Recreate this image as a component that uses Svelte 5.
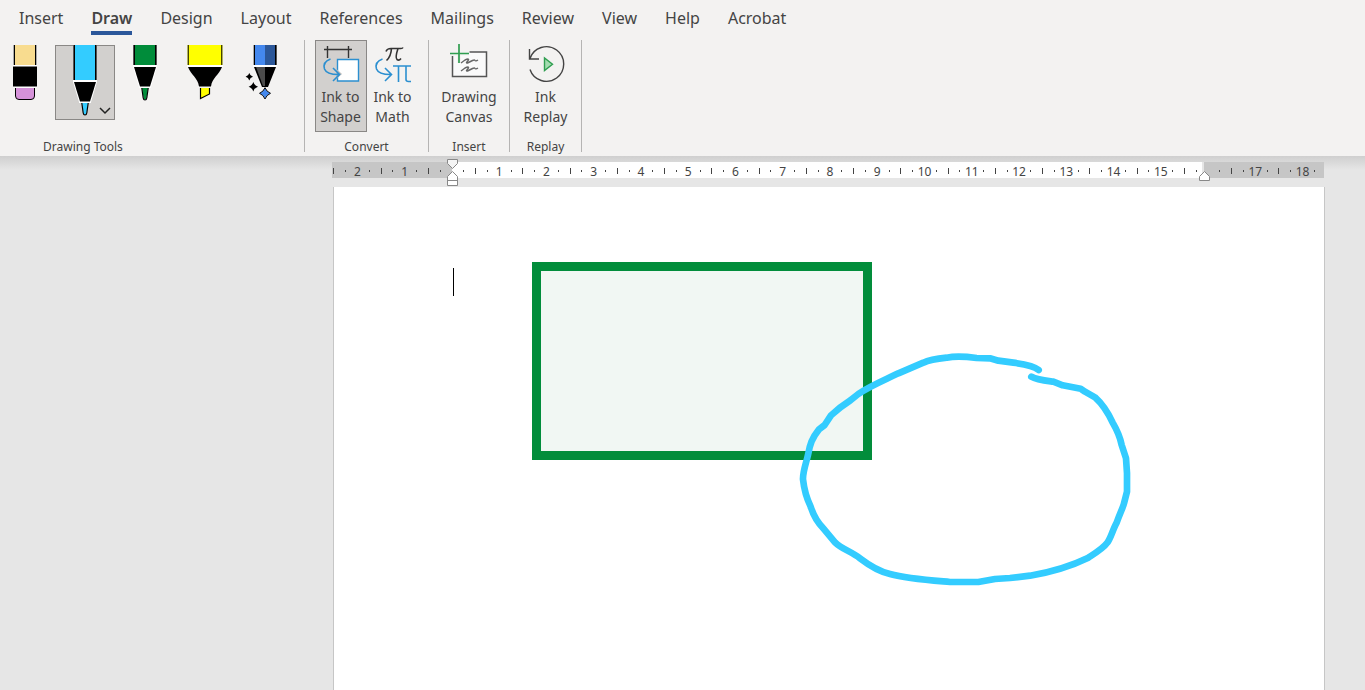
<script lang="ts">
	const tabs = ['Insert', 'Draw', 'Design', 'Layout', 'References', 'Mailings', 'Review', 'View', 'Help', 'Acrobat'];
	let active = $state('Draw');
	let tool = $state('pen');

	// four marks per centimetre, starting 2.5 cm left of the margin
	const marks = Array.from({ length: 84 }, (_, i) => i - 10);

	const kind = (n: number) => {
		if (n === 0 || n === 64) return 'blank';
		if (n % 4 === 0) return 'number';
		return n % 2 === 0 ? 'tick' : 'dot';
	};
</script>

<header class="ribbon">
	<nav class="tabs">
		{#each tabs as tab}
			<button class="tab" class:active={active === tab} onclick={() => (active = tab)}>
				<span>{tab}</span>
			</button>
		{/each}
	</nav>

	<div class="groups">
		<section class="group tools">
			<div class="pens">
				<button class="pen" class:selected={tool === 'eraser'} aria-label="Eraser" onclick={() => (tool = 'eraser')}>
					<svg width="60" height="75" viewBox="0 0 60 75">
						<path d="M18 0h24v20H18z" fill="#aaa" />
						<path d="M19 0h22v20H19z" fill="#000" />
						<path d="M20 0h20v20H20z" fill="#f8dc8f" />
						<path d="M18 20h24v23H18z" fill="#fff" />
						<path d="M18 21.5h24v20H18z" fill="#000" />
						<path d="M20.5 43h19v8q0 3.5-3.5 3.5H24q-3.500 0-3.500-3.500z" fill="#d592d9" />
						<path d="M20.5 43v8q0 3.5 3.5 3.5h12q3.5 0 3.5-3.5v-8" fill="none" stroke="#000" />
					</svg>
				</button>
				<button class="pen" class:selected={tool === 'pen'} aria-label="Pen: light blue" onclick={() => (tool = 'pen')}>
					<svg width="60" height="75" viewBox="0 0 60 75">
						<path d="M18 0h24v35H18z" fill="#aaa" />
						<path d="M18.5 0h23v35h-23z" fill="#000" />
						<path d="M20 0h20v35H20z" fill="#33ccff" />
						<path d="M18 35h24v2l-6 20v1H24v-1l-6-20z" fill="#fff" />
						<path d="M19 37h22l-6 19.5H25z" fill="#000" />
						<path d="M27 58l1.5 10q.2 1.5 1.5 1.5t1.500-1.500L33 58z" fill="#33ccff" />
						<path d="M26.8 58l1.400 10q.3 2 1.800 2t1.800-2l1.400-10" fill="none" stroke="#000" stroke-width="1.2" />
						<path d="M45 63l5 5 5-5" fill="none" stroke="#222" stroke-width="1.5" />
					</svg>
				</button>
				<button class="pen" class:selected={tool === 'green'} aria-label="Pen: green" onclick={() => (tool = 'green')}>
					<svg width="60" height="75" viewBox="0 0 60 75">
						<path d="M18 0h24v20H18z" fill="#aaa" />
						<path d="M18.5 0h23v20h-23z" fill="#000" />
						<path d="M20 0h20v20H20z" fill="#008c3a" />
						<path d="M18 20h24v2l-6 20v1H24v-1l-6-20z" fill="#fff" />
						<path d="M19 22h22l-6 19.5H25z" fill="#000" />
						<path d="M27 43l1.5 10q.2 1.5 1.5 1.5t1.500-1.500L33 43z" fill="#008c3a" />
						<path d="M26.8 43l1.400 10q.3 2 1.800 2t1.800-2l1.400-10" fill="none" stroke="#000" stroke-width="1.2" />
					</svg>
				</button>
				<button class="pen" class:selected={tool === 'marker'} aria-label="Highlighter: yellow" onclick={() => (tool = 'marker')}>
					<svg width="60" height="75" viewBox="0 0 60 75">
						<path d="M12 0h36v20H12z" fill="#b0b060" />
						<path d="M13 0h34v20H13z" fill="#444400" />
						<path d="M14 0h32v20H14z" fill="#ffff00" />
						<path d="M12 20h36v2H12z" fill="#fff" />
						<path d="M13 22h34c-3 8-10 11-11 19.5H24C23 33 16 30 13 22z" fill="#000" />
						<path d="M25.5 43v10.5l9-4.500v-6z" fill="#ffff00" />
						<path d="M25.5 43v10.5l9-4.500v-6" fill="none" stroke="#000" stroke-width="1.2" />
					</svg>
				</button>
				<button class="pen" class:selected={tool === 'action'} aria-label="Action Pen" onclick={() => (tool = 'action')}>
					<svg width="60" height="75" viewBox="0 0 60 75">
						<path d="M18 0h24v20H18z" fill="#aaa" />
						<path d="M19 0h22.5v20H19z" fill="#000" />
						<path d="M20 0h10v20H20z" fill="#4488ee" />
						<path d="M30 0h10v20H30z" fill="#2b5799" />
						<path d="M18 20h24v2H18z" fill="#fff" />
						<path d="M19 22h22l-8 20h-6z" fill="#000" />
						<path d="M21 22h9v19h-2z" fill="#4c4c4c" />
						<path d="M14.3 28q.8 3 3.700 3.700-2.900.8-3.700 3.700-.8-2.900-3.700-3.700 2.900-.7 3.700-3.700zM18.300 37q1.200 3.700 4.700 4.700-3.500 1-4.700 4.700-1.200-3.700-4.700-4.700 3.500-1 4.700-4.700z" fill="#000" />
						<path d="M30 42.7q1.500 4 5.500 5.600-4 1.700-5.500 5.700-1.500-4-5.500-5.700 4-1.600 5.500-5.600z" fill="#4488ee" stroke="#111" />
					</svg>
				</button>
			</div>
			<h2>Drawing Tools</h2>
		</section>

		<section class="group">
			<div class="commands">
				<button class="command pressed" aria-pressed="true">
					<svg width="40" height="40" viewBox="0 0 40 40">
						<path d="M3 5.5h28M6.500 2v12M27.500 2v12" fill="none" stroke="#333" stroke-width="1.4" />
						<path d="M16.5 15.500h21v21.500h-21z" fill="#fff" stroke="#2b8fd0" stroke-width="1.4" />
						<path d="M15.500 25l5.500 5-5.500 5z" fill="#bbb" />
						<path d="M9.500 15C4 17 2 20 3.500 25c1.500 4 6 5.500 14 5.500M12 24l6.500 6.500L12 37" fill="none" stroke="#2b8fd0" stroke-width="1.6" />
					</svg>
					<span>Ink to<br />Shape</span>
				</button>
				<button class="command">
					<svg width="40" height="40" viewBox="0 0 40 40">
						<path d="M13 7.500q1-3 5-3h10q1.500 0 2-1M18.500 4.500q-.5 8-5 12M25 4.500q-3 9-1 11 2 1.500 4-1" fill="none" stroke="#333" stroke-width="1.6" />
						<path d="M9.500 15C4 17 2 20 3.500 25c1.500 4 6 5.500 14 5.500M12 24l6.500 6.500L12 37M20 22h18M25.500 22v16M33 22v13.500q0 2 2.500 2h2.500" fill="none" stroke="#2b8fd0" stroke-width="1.6" />
					</svg>
					<span>Ink to<br />Math</span>
				</button>
			</div>
			<h2>Convert</h2>
		</section>

		<section class="group insert">
			<div class="commands">
				<button class="command">
					<svg width="40" height="40" viewBox="0 0 40 40">
						<path d="M3.500 12v20.500h34V8h-17" fill="#fafafa" stroke="#555" stroke-width="1.5" />
						<path d="M10 0v19M1 9.500h19" fill="none" stroke="#f3f2f1" stroke-width="4" />
						<path d="M10 0v19M1 9.500h19" fill="none" stroke="#2f9e50" stroke-width="1.7" />
						<path d="M12 19l4-3q4-2 3.500 0l-2 2.500q0 1 2 0l4-2q2-1 2.500 0t3-.5M12 27l4-3q4-2 3.500 0l-2 2.500q0 1 2 0l4-2q2-1 2.500 0t3-.5" fill="none" stroke="#666" stroke-width="1.4" />
					</svg>
					<span>Drawing<br />Canvas</span>
				</button>
			</div>
			<h2>Insert</h2>
		</section>

		<section class="group replay">
			<div class="commands">
				<button class="command">
					<svg width="40" height="40" viewBox="0 0 40 40">
						<path d="M4 14.500A17.300 17.300 0 1 1 4 25.500M3.500 5v10H13" fill="none" stroke="#444" stroke-width="1.4" />
						<path d="M18.500 14v12.500l8-6.200z" fill="#a3dcb0" stroke="#2f9e50" stroke-width="1.4" />
					</svg>
					<span>Ink<br />Replay</span>
				</button>
			</div>
			<h2>Replay</h2>
		</section>
	</div>
</header>

<main class="workspace">
	<div class="ruler">
		<div class="marks">
			{#each marks as n}
				<span class="mark {kind(n)}">{kind(n) === 'number' ? Math.abs(n / 4) : ''}</span>
			{/each}
		</div>
		<svg class="indent left" width="12" height="28" viewBox="0 0 12 28">
			<path d="M.5.5h10v4l-5 5-5-5z" fill="#f4f4f4" stroke="#888" />
			<path d="M5.5 12.500l5 5v9H.5v-9zM.5 21.500h10" fill="#fff" stroke="#888" />
		</svg>
		<svg class="indent right" width="12" height="28" viewBox="0 0 12 28">
			<path d="M5.5 12.500l5 5v4H.5v-4z" fill="#fff" stroke="#888" />
		</svg>
	</div>

	<div class="page">
		<svg width="820" height="503" viewBox="0 0 820 503">
			<path d="M119.500 81v28" stroke="#000" />
			<rect x="202.500" y="79.500" width="331" height="189" fill="#f1f7f3" stroke="#028d3b" stroke-width="9" />
			<svg x="446" y="153" width="370" height="260" viewBox="0 0 1110 780">
				<path
					d="M776 90C765 80 730 72 700 68L655 62 630 55 590 54C560 50 520 49 500 53 470 56 440 63 430 68L355 100C310 122 270 138 235 162L210 182C185 198 165 215 153 226L134 255 117 268C95 295 90 315 85 340 80 365 68 395 69 418 72 445 80 475 92 500 100 525 115 550 130 565L165 607C185 627 215 635 240 655 270 678 300 695 330 702 380 716 440 720 510 726L595 726 645 717 690 714 750 707C820 695 880 675 925 653 945 640 970 625 982 608 992 595 998 570 1010 548 1020 520 1030 500 1032 490L1041 455V400L1038 355 1025 315C1020 290 1005 260 998 248 985 220 965 190 945 172L915 155 902 146 848 136 820 125C795 122 770 120 754 110"
					fill="none"
					stroke="#33ccff"
					stroke-width="20"
					stroke-linecap="round"
					stroke-linejoin="round"
				/>
			</svg>
		</svg>
	</div>
</main>

<style>
	:global(body) {
		margin: 0;
		background: #e6e6e6;
	}

	.ribbon {
		background: #f3f2f1;
		color: #444;
		font-family: 'Noto Sans', sans-serif;
	}

	button {
		font-family: inherit;
		color: inherit;
		background: transparent;
		border: 0;
		padding: 0;
	}

	.tabs {
		display: flex;
		align-items: flex-start;
		gap: 28px;
		height: 36px;
		padding-left: 19px;
		box-sizing: border-box;
	}

	.tab {
		height: 35px;
		box-sizing: border-box;
		border-bottom: 4px solid transparent;
		font-size: 16px;
		line-height: 36px;
		white-space: nowrap;
	}

	.tab span {
		display: block;
		height: 31px;
	}

	.tab.active {
		font-weight: 600;
		border-bottom-color: #2b579a;
	}

	.groups {
		display: flex;
		height: 120px;
		box-sizing: border-box;
		padding: 4px 0;
	}

	.group {
		display: flex;
		flex-direction: column;
		align-items: center;
		justify-content: space-between;
		width: 123px;
		border-right: 1px solid #b5b4b3;
	}

	.group.tools {
		width: 304px;
		align-items: flex-start;
	}

	.group.insert {
		width: 80px;
	}

	.group.replay {
		width: 71px;
	}

	h2 {
		margin: 0;
		font-size: 12px;
		font-weight: 400;
		line-height: 10px;
	}

	.tools h2 {
		padding-left: 43px;
	}

	.pens {
		display: flex;
		margin-left: -5px;
		padding-top: 5px;
	}

	.pen {
		width: 60px;
		height: 75px;
	}

	.pen svg {
		display: block;
	}

	.pen.selected {
		background: #d2d0ce;
		box-shadow: inset 0 0 0 1px #8a8886;
	}

	.commands {
		display: flex;
	}

	.command {
		min-width: 52px;
		height: 92px;
		display: flex;
		flex-direction: column;
		align-items: center;
		padding-top: 4px;
		font-size: 14px;
		line-height: 20px;
	}

	.command svg {
		flex: none;
		margin-bottom: 3px;
	}

	.command.pressed {
		background: #d2d0ce;
		box-shadow: inset 0 0 0 1px #8a8886;
	}

	.workspace {
		padding: 6px 41px 0 332px;
		background: linear-gradient(#cfcfcf, #e6e6e6 14px);
	}

	.ruler {
		position: relative;
		height: 16px;
		background: #c6c6c6;
		padding: 0 120px 0 120px;
	}

	.ruler::before {
		content: '';
		display: block;
		height: 16px;
		background: #fff;
		border-right: 2px solid #e6e6e6;
	}

	.marks {
		position: absolute;
		inset: 1px 4px -1px -4px;
		display: flex;
	}

	.mark {
		flex: 1 1 0;
		min-width: 0;
		display: flex;
		align-items: center;
		justify-content: center;
		font: 12px 'Noto Sans', sans-serif;
		color: #444;
	}

	.tick::before {
		content: '';
		flex: none;
		width: 1px;
		height: 6px;
		background: #444;
	}

	.dot::before {
		content: '';
		flex: none;
		width: 1px;
		height: 2px;
		background: #444;
	}

	.indent {
		position: absolute;
		top: -3px;
	}

	.indent.left {
		left: 115px;
	}

	.indent.right {
		right: 113px;
	}

	.page {
		margin-top: 9px;
		min-height: calc(100vh - 187px);
		background: #fff;
		border: solid #c6c6c6;
		border-width: 0 1px;
		margin-right: -1px;
		margin-left: 1px;
	}

	.page svg {
		display: block;
	}
</style>
